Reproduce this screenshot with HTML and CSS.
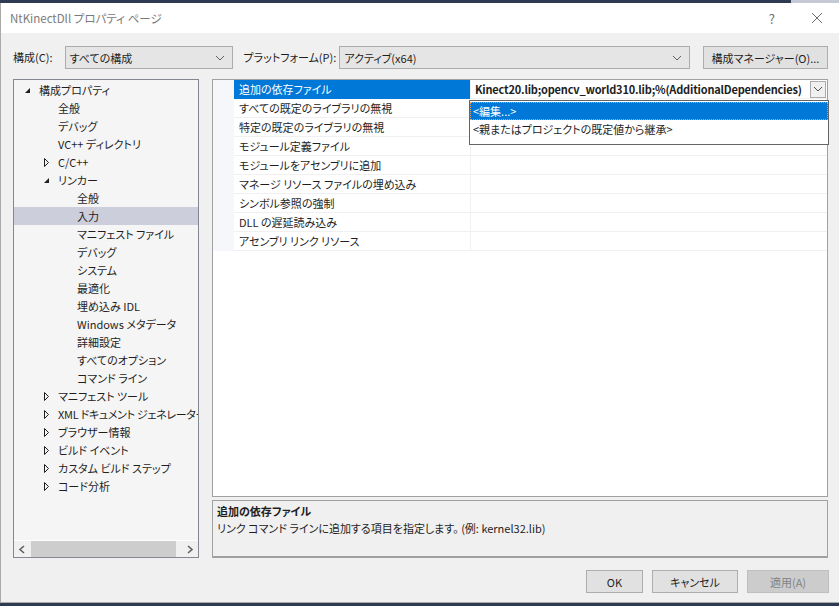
FILE: index.html
```html
<!DOCTYPE html>
<html lang="ja">

<head>
  <meta charset="UTF-8">
  <meta name="viewport" content="width=device-width, initial-scale=1.0">
  <title>NtKinectDll プロパティ ページ</title>
  <link rel="stylesheet" href="styles.css">
</head>

<body>
  <div class="desktop-strip"></div>
  <div class="dialog">
    <div class="titlebar">
      <span class="title">NtKinectDll プロパティ ページ</span>
      <span class="help">?</span>
      <svg class="close" width="12" height="12" viewBox="0 0 12 12">
        <path d="M1 1 L11 11 M11 1 L1 11" stroke="#6d6d6d" stroke-width="1" fill="none"/>
      </svg>
    </div>

    <div class="toolbar">
      <label class="lbl">構成(C):</label>
      <div class="combo combo-config">
        <span>すべての構成</span>
        <svg class="chev" width="10" height="6" viewBox="0 0 10 6"><polyline points="1,1 5,5 9,1" stroke="#606060" fill="none"/></svg>
      </div>
      <label class="lbl lbl-platform">プラットフォーム(P):</label>
      <div class="combo combo-platform">
        <span>アクティブ(x64)</span>
        <svg class="chev" width="10" height="6" viewBox="0 0 10 6"><polyline points="1,1 5,5 9,1" stroke="#606060" fill="none"/></svg>
      </div>
      <button class="btn btn-manager">構成マネージャー(O)...</button>
    </div>

    <div class="main">
      <div class="tree">
        <div class="tree-items">
          <div class="node l0"><span class="twisty"><svg width="16" height="18"><polygon points="7,7 7,12 2,12" fill="#1e1e1e"/></svg></span>構成プロパティ</div>
          <div class="node l2">全般</div>
          <div class="node l2">デバッグ</div>
          <div class="node l2">VC++ ディレクトリ</div>
          <div class="node l1"><span class="twisty"><svg width="16" height="18"><polygon points="2.5,5.5 2.5,13.5 6.5,9.5" fill="none" stroke="#1e1e1e"/></svg></span>C/C++</div>
          <div class="node l1"><span class="twisty"><svg width="16" height="18"><polygon points="7,7 7,12 2,12" fill="#1e1e1e"/></svg></span>リンカー</div>
          <div class="node l3">全般</div>
          <div class="node l3 selected">入力</div>
          <div class="node l3">マニフェスト ファイル</div>
          <div class="node l3">デバッグ</div>
          <div class="node l3">システム</div>
          <div class="node l3">最適化</div>
          <div class="node l3">埋め込み IDL</div>
          <div class="node l3">Windows メタデータ</div>
          <div class="node l3">詳細設定</div>
          <div class="node l3">すべてのオプション</div>
          <div class="node l3">コマンド ライン</div>
          <div class="node l1"><span class="twisty"><svg width="16" height="18"><polygon points="2.5,5.5 2.5,13.5 6.5,9.5" fill="none" stroke="#1e1e1e"/></svg></span>マニフェスト ツール</div>
          <div class="node l1"><span class="twisty"><svg width="16" height="18"><polygon points="2.5,5.5 2.5,13.5 6.5,9.5" fill="none" stroke="#1e1e1e"/></svg></span><span class="clip">XML ドキュメント ジェネレーター</span></div>
          <div class="node l1"><span class="twisty"><svg width="16" height="18"><polygon points="2.5,5.5 2.5,13.5 6.5,9.5" fill="none" stroke="#1e1e1e"/></svg></span>ブラウザー情報</div>
          <div class="node l1"><span class="twisty"><svg width="16" height="18"><polygon points="2.5,5.5 2.5,13.5 6.5,9.5" fill="none" stroke="#1e1e1e"/></svg></span>ビルド イベント</div>
          <div class="node l1"><span class="twisty"><svg width="16" height="18"><polygon points="2.5,5.5 2.5,13.5 6.5,9.5" fill="none" stroke="#1e1e1e"/></svg></span>カスタム ビルド ステップ</div>
          <div class="node l1"><span class="twisty"><svg width="16" height="18"><polygon points="2.5,5.5 2.5,13.5 6.5,9.5" fill="none" stroke="#1e1e1e"/></svg></span>コード分析</div>
        </div>
        <div class="hscroll">
          <svg class="arrow" width="17" height="17" viewBox="0 0 17 17"><polyline points="10,5 6,8.5 10,12" stroke="#606060" stroke-width="1.6" fill="none"/></svg>
          <div class="track"><div class="thumb"></div></div>
          <svg class="arrow" width="17" height="17" viewBox="0 0 17 17"><polyline points="7,5 11,8.5 7,12" stroke="#606060" stroke-width="1.6" fill="none"/></svg>
        </div>
      </div>

      <div class="right">
        <div class="grid">
          <div class="prop-row active">
            <div class="gutter"></div>
            <div class="name">追加の依存ファイル</div>
            <div class="value">
              <span class="bold">Kinect20.lib;opencv_world310.lib;%(AdditionalDependencies)</span>
              <span class="drop-btn"><svg width="10" height="6" viewBox="0 0 10 6"><polyline points="1,1 5,5 9,1" stroke="#505050" fill="none"/></svg></span>
            </div>
          </div>
          <div class="prop-row"><div class="gutter"></div><div class="name">すべての既定のライブラリの無視</div><div class="value"></div></div>
          <div class="prop-row"><div class="gutter"></div><div class="name">特定の既定のライブラリの無視</div><div class="value"></div></div>
          <div class="prop-row"><div class="gutter"></div><div class="name">モジュール定義ファイル</div><div class="value"></div></div>
          <div class="prop-row"><div class="gutter"></div><div class="name">モジュールをアセンブリに追加</div><div class="value"></div></div>
          <div class="prop-row"><div class="gutter"></div><div class="name">マネージ リソース ファイルの埋め込み</div><div class="value"></div></div>
          <div class="prop-row"><div class="gutter"></div><div class="name">シンボル参照の強制</div><div class="value"></div></div>
          <div class="prop-row"><div class="gutter"></div><div class="name">DLL の遅延読み込み</div><div class="value"></div></div>
          <div class="prop-row"><div class="gutter"></div><div class="name">アセンブリ リンク リソース</div><div class="value"></div></div>

          <div class="dropdown">
            <div class="opt picked">&lt;編集...&gt;</div>
            <div class="opt">&lt;親またはプロジェクトの既定値から継承&gt;</div>
          </div>
        </div>

        <div class="desc">
          <div class="desc-title">追加の依存ファイル</div>
          <div class="desc-text">リンク コマンド ラインに追加する項目を指定します。 (例: kernel32.lib)</div>
        </div>
      </div>
    </div>

    <div class="footer">
      <button class="btn btn-ok">OK</button>
      <button class="btn btn-cancel">キャンセル</button>
      <button class="btn btn-apply" disabled>適用(A)</button>
    </div>
  </div>
</body>

</html>
```

FILE: styles.css
```css
* {
  margin: 0;
  padding: 0;
  box-sizing: border-box;
}

body {
  width: 839px;
  height: 606px;
  overflow: hidden;
  background-color: #2d3a52;
  font-family: "Noto Sans CJK JP", "Noto Sans", sans-serif;
  font-size: 11px;
  font-feature-settings: "palt";
  color: #1e1e1e;
}

.desktop-strip {
  height: 3px;
  background: linear-gradient(to right, #2d3a52 0, #2d3a52 791px, #c5cad6 791px);
}

.dialog {
  height: 600px;
  background-color: #f0f0f0;
  border-left: 1px solid #aaaaaa;
  border-bottom: 1px solid #aaaaaa;
  display: flex;
  flex-direction: column;
}

/* title bar */
.titlebar {
  height: 30px;
  background-color: #ffffff;
  display: flex;
  align-items: center;
  padding-left: 9px;
}

.title {
  flex: 1;
  color: #7a7a7a;
  font-size: 11.5px;
  line-height: 14px;
}

.help {
  color: #6d6d6d;
  font-size: 13px;
  margin-right: 36px;
}

.close {
  margin-right: 16px;
}

/* toolbar */
.toolbar {
  display: flex;
  align-items: center;
  padding: 13px 11px 0 12px;
  height: 36px;
}

.lbl {
  flex: none;
  white-space: nowrap;
  line-height: 23px;
  margin-right: 12px;
}

.lbl-platform {
  margin-left: 11px;
  margin-right: 3px;
}

.combo {
  flex: none;
  height: 23px;
  background-color: #e5e5e5;
  border: 1px solid #acacac;
  display: flex;
  align-items: center;
  padding-left: 4px;
  padding-right: 7px;
  white-space: nowrap;
}

.combo span {
  flex: 1;
}

.combo-config {
  width: 168px;
}

.combo-platform {
  width: 351px;
}

.btn {
  font-family: inherit;
  font-size: 11px;
  font-feature-settings: "palt";
  color: #1e1e1e;
  background-color: #e1e1e1;
  border: 1px solid #adadad;
  height: 23px;
  white-space: nowrap;
}

.btn-manager {
  margin-left: auto;
  width: 125px;
  flex: none;
}

/* main area */
.main {
  display: flex;
  padding: 10px 11px 0 12px;
  gap: 13px;
  height: 489px;
}

.tree {
  width: 186px;
  flex: none;
  border: 1px solid #828790;
  background-color: #f5f5f5;
  display: flex;
  flex-direction: column;
}

.tree-items {
  flex: 1;
  overflow: hidden;
  padding-top: 1px;
}

.node {
  height: 18px;
  line-height: 18px;
  white-space: nowrap;
  display: flex;
  align-items: center;
}

.clip {
  letter-spacing: -0.3px;
}

.twisty {
  width: 16px;
  height: 18px;
  flex: none;
}

.twisty svg {
  display: block;
}

.node.l0 {
  padding-left: 9px;
}

.node.l1 {
  padding-left: 28px;
}

.node.l2 {
  padding-left: 44px;
}

.node.l3 {
  padding-left: 63px;
}

.node.selected {
  background-color: #cccedb;
}

.hscroll {
  height: 17px;
  display: flex;
  align-items: center;
  background-color: #f0f0f0;
  border-top: 1px solid #ffffff;
}

.hscroll .arrow {
  flex: none;
}

.track {
  flex: 1;
  height: 17px;
}

.thumb {
  width: 145px;
  height: 16px;
  background-color: #cdcdcd;
}

.right {
  flex: 1;
  min-width: 0;
  display: flex;
  flex-direction: column;
  gap: 3px;
}

/* property grid */
.grid {
  position: relative;
  height: 418px;
  background-color: #ffffff;
  border: 1px solid #a0a0a0;
}

.prop-row {
  display: flex;
  height: 19px;
}

.gutter {
  width: 21px;
  flex: none;
  background-color: #f5f7fb;
}

.name {
  width: 236px;
  flex: none;
  padding-left: 5px;
  line-height: 18px;
  border-bottom: 1px solid #f0f0f0;
  white-space: nowrap;
}

.value {
  flex: 1;
  min-width: 0;
  border-left: 1px solid #f0f0f0;
  border-bottom: 1px solid #f0f0f0;
  display: flex;
  align-items: center;
  padding-left: 4px;
}

.prop-row.active .name {
  background-color: #0078d7;
  color: #ffffff;
  border-bottom-color: #0078d7;
}

.bold {
  flex: 1;
  min-width: 0;
  font-weight: bold;
  letter-spacing: -0.2px;
  white-space: nowrap;
  overflow: hidden;
}

.drop-btn {
  flex: none;
  width: 16px;
  height: 17px;
  margin-right: 1px;
  border: 1px solid #acacac;
  background-color: #f0f0f0;
  display: flex;
  align-items: center;
  justify-content: center;
}

.dropdown {
  position: absolute;
  top: 20px;
  left: 256px;
  width: 360px;
  height: 45px;
  background-color: #ffffff;
  border: 1px solid #646464;
  padding: 1px 0 0 0;
}

.opt {
  height: 18px;
  line-height: 18px;
  padding-left: 3px;
  white-space: nowrap;
}

.opt.picked {
  background-color: #0078d7;
  color: #ffffff;
  outline: 1px dotted #e8a060;
  outline-offset: -1px;
}

/* description */
.desc {
  flex: 1;
  border: 1px solid #a0a0a0;
  border-bottom-width: 2px;
  padding: 2px 4px;
}

.desc-title {
  font-weight: bold;
  line-height: 17px;
}

.desc-text {
  line-height: 17px;
}

/* footer buttons */
.footer {
  display: flex;
  justify-content: flex-end;
  gap: 9px;
  padding: 12px 10px 0 0;
}

.btn-ok {
  width: 57px;
}

.btn-cancel {
  width: 86px;
}

.btn-apply {
  width: 82px;
  background-color: #cccccc;
  border-color: #bfbfbf;
  color: #838383;
}
```
